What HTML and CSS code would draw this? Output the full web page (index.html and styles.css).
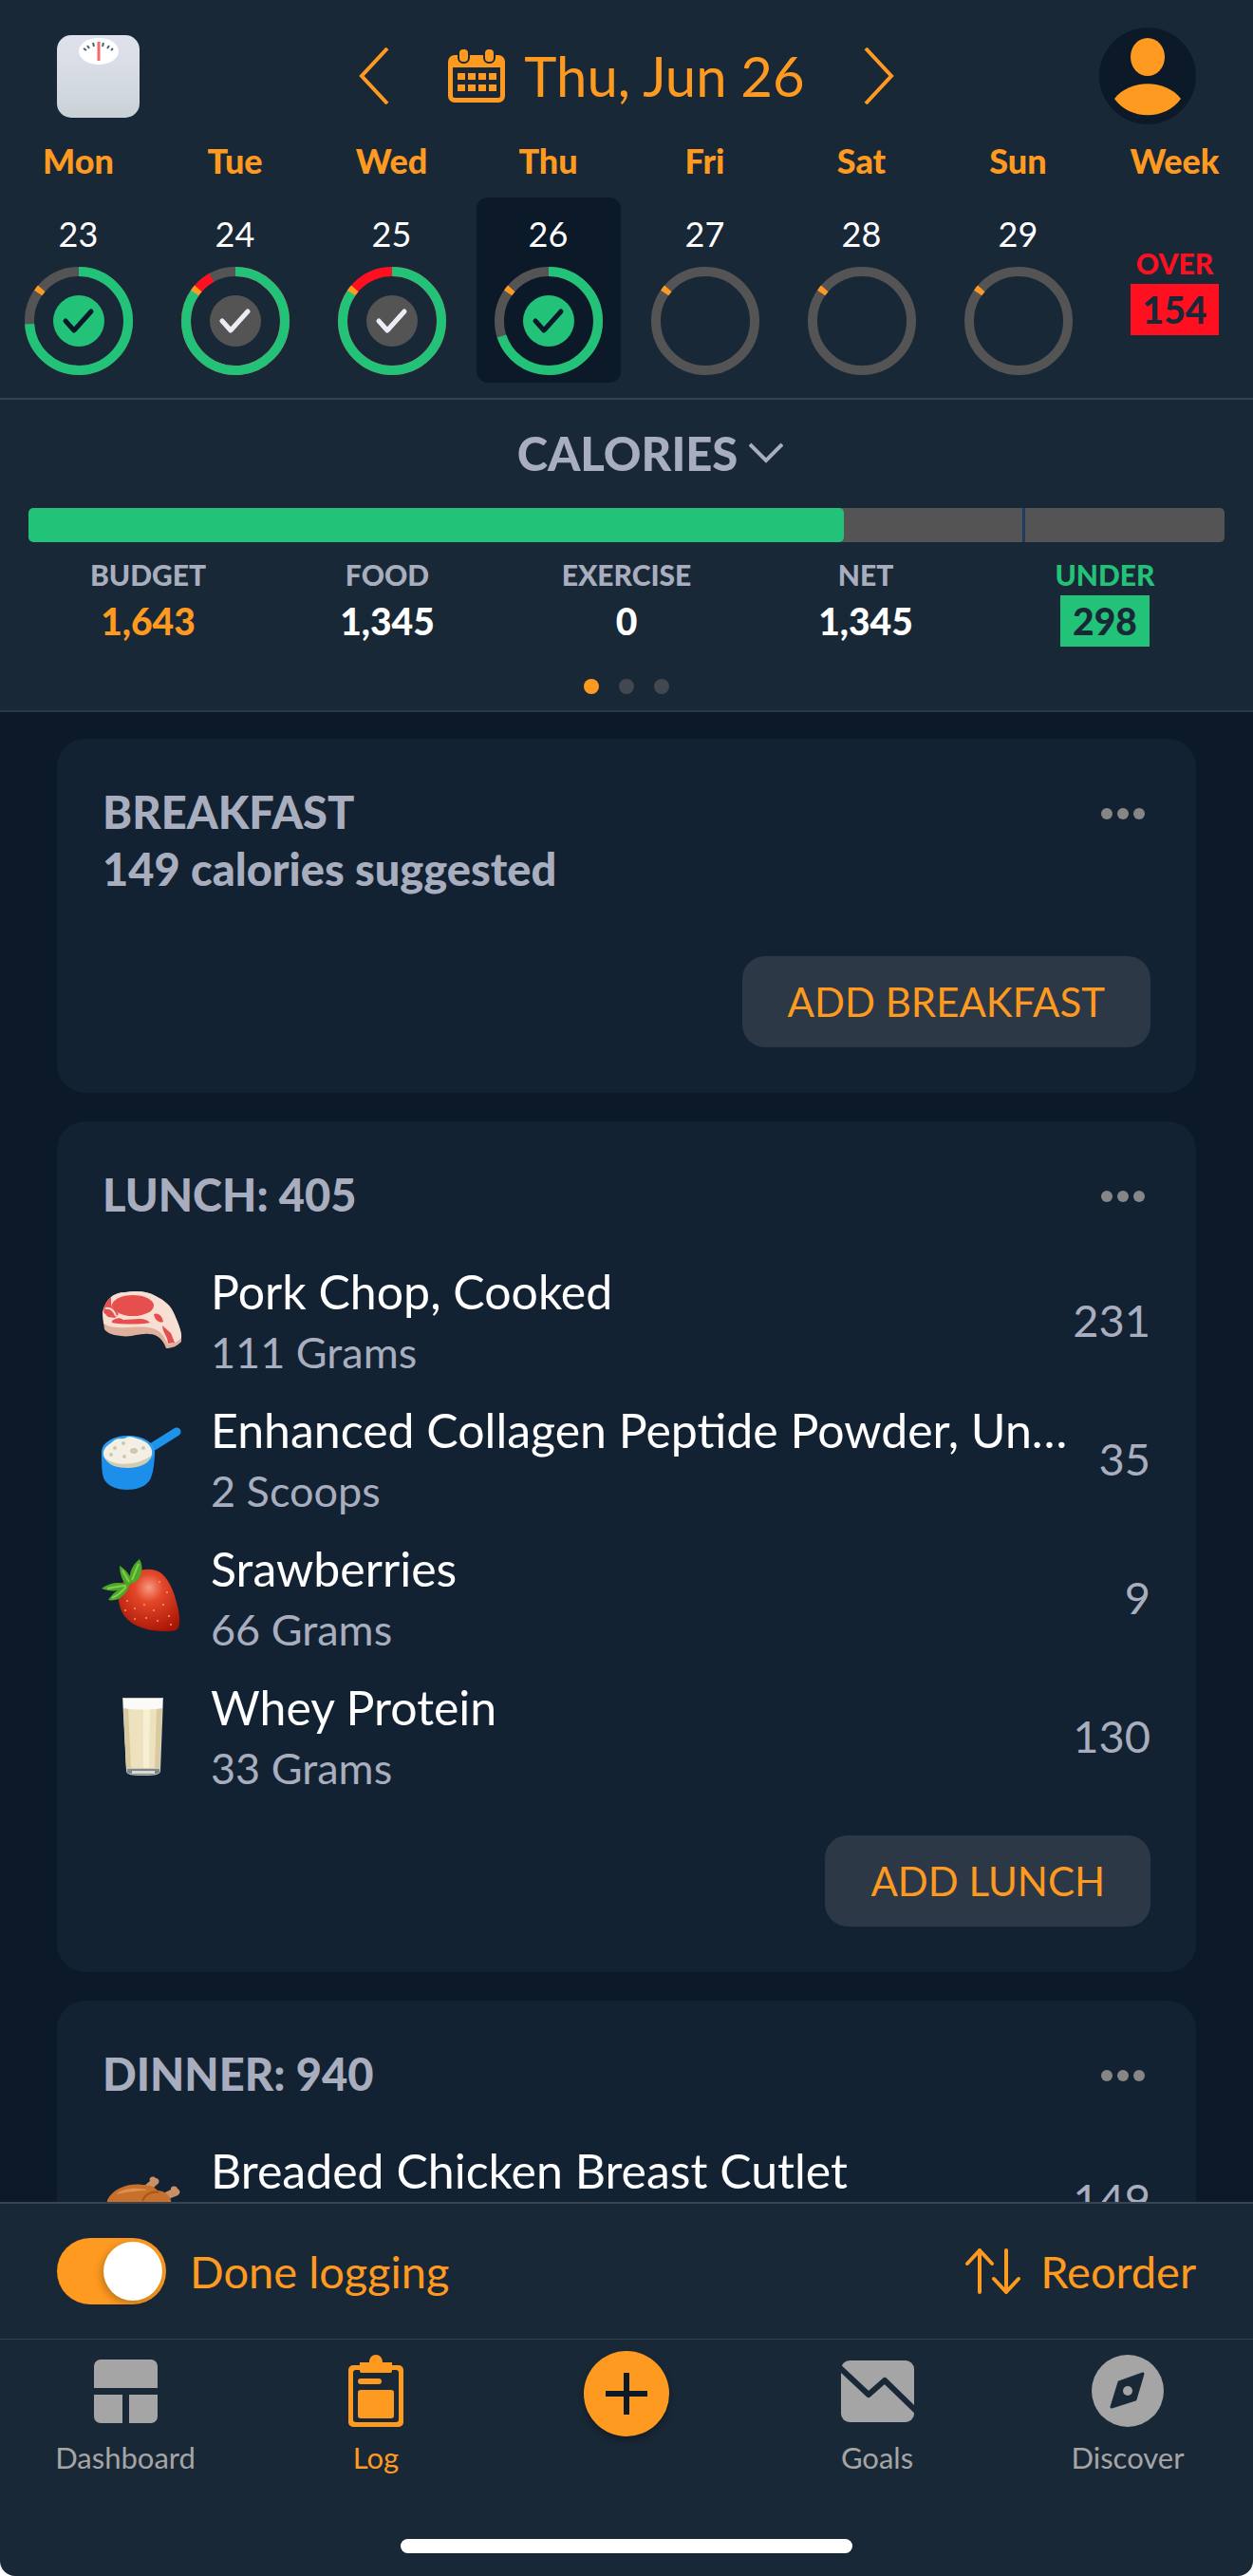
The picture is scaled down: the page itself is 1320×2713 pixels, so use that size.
FILE: index.html
```html
<!DOCTYPE html>
<html lang="en">
<head>
    <meta charset="UTF-8">
    <meta name="viewport" content="width=device-width, initial-scale=1.0">
    <title>Food Log</title>
    <link rel="stylesheet" href="styles.css">
</head>
<body>
    <div class="app">
        <header class="header">
            <div class="topbar">
                <button type="button" class="icon-btn" aria-label="Weigh in">
                    <svg width="87" height="87" viewBox="0 0 87 87">
                        <defs>
                            <linearGradient id="scaleFill" x1="0" y1="0" x2="0" y2="1">
                                <stop offset="0" stop-color="#dfe2ea"/>
                                <stop offset="0.6" stop-color="#d5dae2"/>
                                <stop offset="1" stop-color="#c8d1d6"/>
                            </linearGradient>
                        </defs>
                        <rect width="87" height="87" rx="15" fill="url(#scaleFill)"/>
                        <ellipse cx="44" cy="17" rx="21" ry="14" fill="#fff"/>
                        <path d="M28 14l3 2M32 11l2 3M38 8l1 4M49 8l-1 4M55 11l-2 3M59 14l-2 2" stroke="#4a6274" stroke-width="2"/>
                        <path d="M44 7v20" stroke="#f26b6b" stroke-width="3"/>
                    </svg>
                </button>
                <div class="date-nav">
                    <button type="button" class="icon-btn" aria-label="Previous day">
                        <svg width="32" height="60" viewBox="0 0 32 60" fill="none" stroke="#ff9a20" stroke-width="4">
                            <path d="M30 1L3 30l27 29"/>
                        </svg>
                    </button>
                    <button type="button" class="date">
                        <svg width="60" height="56" viewBox="0 0 60 56">
                            <path fill="#ff9a20" fill-rule="evenodd" d="M7 6h46a7 7 0 0 1 7 7v36a7 7 0 0 1-7 7H7a7 7 0 0 1-7-7V13a7 7 0 0 1 7-7zM5 19v30a2 2 0 0 0 2 2h46a2 2 0 0 0 2-2V19z"/>
                            <g fill="#ff9a20" stroke="#192837" stroke-width="2">
                                <rect x="11" y="-1" width="11" height="15" rx="5"/>
                                <rect x="38" y="-1" width="11" height="15" rx="5"/>
                            </g>
                            <path fill="#ff9a20" d="M10 25h8v7h-8zM21 25h8v7h-8zM32 25h8v7h-8zM43 25h8v7h-8zM10 37h8v7h-8zM21 37h8v7h-8zM32 37h8v7h-8zM43 37h8v7h-8z"/>
                        </svg>
                        Thu, Jun 26
                    </button>
                    <button type="button" class="icon-btn" aria-label="Next day">
                        <svg width="32" height="60" viewBox="0 0 32 60" fill="none" stroke="#ff9a20" stroke-width="4">
                            <path d="M2 1l27 29L2 59"/>
                        </svg>
                    </button>
                </div>
                <button type="button" class="icon-btn profile" aria-label="Profile">
                    <svg width="102" height="102" viewBox="0 0 102 102">
                        <circle cx="51" cy="51" r="51" fill="#0c1928"/>
                        <ellipse cx="51" cy="31" rx="18" ry="20" fill="#ff9a20"/>
                        <path d="M16 75C32 54 70 54 86 75 70 98 32 98 16 75z" fill="#ff9a20"/>
                    </svg>
                </button>
            </div>

            <div class="week">
                <div class="day">
                    <span class="day-name">Mon</span>
                    <a href="#" class="day-cell">
                        23
                        <svg class="ring" viewBox="0 0 114 114">
                            <circle class="track" cx="57" cy="57" r="52"/>
                            <circle class="eaten" cx="57" cy="57" r="52" pathLength="100" stroke-dasharray="74 100"/>
                            <circle class="goal" cx="57" cy="57" r="52" pathLength="100" stroke-dasharray="0 84.6 1.8 100"/>
                            <circle class="done" cx="57" cy="57" r="27"/>
                            <path class="tick" d="M43 57l9 10 18-20"/>
                        </svg>
                    </a>
                </div>
                <div class="day">
                    <span class="day-name">Tue</span>
                    <a href="#" class="day-cell">
                        24
                        <svg class="ring over" viewBox="0 0 114 114">
                            <circle class="track" cx="57" cy="57" r="52"/>
                            <circle class="extra" cx="57" cy="57" r="52" pathLength="100" stroke-dasharray="92 100"/>
                            <circle class="eaten" cx="57" cy="57" r="52" pathLength="100" stroke-dasharray="85 100"/>
                            <circle class="goal" cx="57" cy="57" r="52" pathLength="100" stroke-dasharray="0 84.6 1.8 100"/>
                            <circle class="done" cx="57" cy="57" r="27"/>
                            <path class="tick" d="M43 57l9 10 18-20"/>
                        </svg>
                    </a>
                </div>
                <div class="day">
                    <span class="day-name">Wed</span>
                    <a href="#" class="day-cell">
                        25
                        <svg class="ring over" viewBox="0 0 114 114">
                            <circle class="extra" cx="57" cy="57" r="52"/>
                            <circle class="eaten" cx="57" cy="57" r="52" pathLength="100" stroke-dasharray="85 100"/>
                            <circle class="goal" cx="57" cy="57" r="52" pathLength="100" stroke-dasharray="0 84.6 1.8 100"/>
                            <circle class="done" cx="57" cy="57" r="27"/>
                            <path class="tick" d="M43 57l9 10 18-20"/>
                        </svg>
                    </a>
                </div>
                <div class="day">
                    <span class="day-name">Thu</span>
                    <a href="#" class="day-cell selected" aria-current="date">
                        26
                        <svg class="ring" viewBox="0 0 114 114">
                            <circle class="track" cx="57" cy="57" r="52"/>
                            <circle class="eaten" cx="57" cy="57" r="52" pathLength="100" stroke-dasharray="70 100"/>
                            <circle class="goal" cx="57" cy="57" r="52" pathLength="100" stroke-dasharray="0 84.6 1.8 100"/>
                            <circle class="done" cx="57" cy="57" r="27"/>
                            <path class="tick" d="M43 57l9 10 18-20"/>
                        </svg>
                    </a>
                </div>
                <div class="day">
                    <span class="day-name">Fri</span>
                    <a href="#" class="day-cell">
                        27
                        <svg class="ring" viewBox="0 0 114 114">
                            <circle class="track" cx="57" cy="57" r="52"/>
                            <circle class="goal" cx="57" cy="57" r="52" pathLength="100" stroke-dasharray="0 84.6 1.8 100"/>
                        </svg>
                    </a>
                </div>
                <div class="day">
                    <span class="day-name">Sat</span>
                    <a href="#" class="day-cell">
                        28
                        <svg class="ring" viewBox="0 0 114 114">
                            <circle class="track" cx="57" cy="57" r="52"/>
                            <circle class="goal" cx="57" cy="57" r="52" pathLength="100" stroke-dasharray="0 84.6 1.8 100"/>
                        </svg>
                    </a>
                </div>
                <div class="day">
                    <span class="day-name">Sun</span>
                    <a href="#" class="day-cell">
                        29
                        <svg class="ring" viewBox="0 0 114 114">
                            <circle class="track" cx="57" cy="57" r="52"/>
                            <circle class="goal" cx="57" cy="57" r="52" pathLength="100" stroke-dasharray="0 84.6 1.8 100"/>
                        </svg>
                    </a>
                </div>
                <div class="day">
                    <span class="day-name">Week</span>
                    <div class="week-total">
                        <span class="stat-label red">OVER</span>
                        <span class="badge badge-red">154</span>
                    </div>
                </div>
            </div>
        </header>

        <section class="summary">
            <button type="button" class="summary-title">
                CALORIES
                <svg width="36" height="22" viewBox="0 0 36 22" fill="none" stroke="#a9aebf" stroke-width="4">
                    <path d="M1 2l17 17L35 2"/>
                </svg>
            </button>
            <div class="bar">
                <div class="bar-fill" style="width: 68.2%"></div>
                <div class="bar-mark" style="left: 83.1%"></div>
            </div>
            <div class="stats">
                <div class="stat">
                    <span class="stat-label">BUDGET</span>
                    <span class="stat-value orange">1,643</span>
                </div>
                <div class="stat">
                    <span class="stat-label">FOOD</span>
                    <span class="stat-value">1,345</span>
                </div>
                <div class="stat">
                    <span class="stat-label">EXERCISE</span>
                    <span class="stat-value">0</span>
                </div>
                <div class="stat">
                    <span class="stat-label">NET</span>
                    <span class="stat-value">1,345</span>
                </div>
                <div class="stat">
                    <span class="stat-label green">UNDER</span>
                    <span class="badge badge-green">298</span>
                </div>
            </div>
            <div class="pager">
                <span class="pager-dot active"></span>
                <span class="pager-dot"></span>
                <span class="pager-dot"></span>
            </div>
        </section>

        <main class="meals">
            <section class="card">
                <div class="card-head">
                    <h2>BREAKFAST</h2>
                    <button type="button" class="more" aria-label="Breakfast options"><i></i><i></i><i></i></button>
                </div>
                <p class="suggested">149 calories suggested</p>
                <button type="button" class="add-btn">ADD BREAKFAST</button>
            </section>

            <section class="card">
                <div class="card-head">
                    <h2>LUNCH: 405</h2>
                    <button type="button" class="more" aria-label="Lunch options"><i></i><i></i><i></i></button>
                </div>
                <ul class="foods">
                    <li class="food">
                        <svg class="food-icon" viewBox="0 0 84 84">
                            <path fill="#dfb09c" d="M0 36C2 22 10 13 24 13c12-2 24-1 32 4 10 5 16 10 20 20 4 9 8 19 7 28-5 5-10 7-16 7-3-8-8-15-18-15-11-1-18 4-30 2-7-1-13-2-17-7z"/>
                            <path fill="#f8dfd3" d="M0 34C3 21 11 13 24 13c12-2 24-1 32 4 10 5 16 10 20 20 4 9 8 19 7 24-4 4-8 6-14 7-4-9-9-17-21-18-15-2-33 4-47-4z"/>
                            <ellipse cx="32" cy="27" rx="22" ry="11" fill="#e5504f"/>
                            <path fill="#e5504f" d="M2 28c2-5 4-8 7-10 0 6 0 9 2 12l6 6-4 4-7-1-5-5zM10 43c4-3 8-4 12-1l17-1c6 0 9 2 11 4-10 2-30 2-40 0zM54 36c5-2 9 2 10 8-3 2-9-1-10-8zM63 48l9 8 4 10-7 1c0-7-6-12-6-19z"/>
                            <path fill="none" stroke="#f8dfd3" stroke-width="2" d="M3 30c5-1 9 2 11 8"/>
                        </svg>
                        <div class="food-text">
                            <span class="food-name">Pork Chop, Cooked</span>
                            <span class="food-amount">111 Grams</span>
                        </div>
                        <span class="food-cal">231</span>
                    </li>
                    <li class="food">
                        <svg class="food-icon" viewBox="0 0 84 84">
                            <path stroke="#1e93ea" stroke-width="9" stroke-linecap="round" d="M54 29L78 14"/>
                            <path fill="#1b8fe9" d="M-1 35c0 14 0 26 4 31 9 12 37 12 46 0 4-5 6-20 6-31z"/>
                            <ellipse cx="27" cy="35" rx="28" ry="17" fill="#2a9cf1"/>
                            <path fill="#f3efe3" d="M1 38c-1-7 5-10 10-14 5-5 9-1 14-4 5-3 9 1 15 2 8 3 13 9 12 15-1 9-13 14-25 14S2 46 1 38z"/>
                            <path fill="#d3cbb2" d="M3 42c11 9 36 7 48-3-1 8-12 13-24 13C15 52 6 49 3 42z"/>
                            <g fill="#cdc6b0"><circle cx="13" cy="31" r="2"/><circle cx="22" cy="26" r="2"/><ellipse cx="33" cy="34" rx="4" ry="3"/><circle cx="23" cy="40" r="2"/><circle cx="43" cy="31" r="2"/><circle cx="9" cy="38" r="2"/></g>
                        </svg>
                        <div class="food-text">
                            <span class="food-name">Enhanced Collagen Peptide Powder, Un…</span>
                            <span class="food-amount">2 Scoops</span>
                        </div>
                        <span class="food-cal">35</span>
                    </li>
                    <li class="food">
                        <svg class="food-icon" viewBox="0 0 84 84">
                            <defs>
                                <radialGradient id="berry" cx="0.5" cy="0.3" r="0.75">
                                    <stop offset="0" stop-color="#f69a83"/>
                                    <stop offset="0.3" stop-color="#e4482a"/>
                                    <stop offset="1" stop-color="#a91405"/>
                                </radialGradient>
                            </defs>
                            <path fill="url(#berry)" d="M25 22c9-9 26-13 37-5 10 8 15 25 18 39 1 7 3 18-3 21-15 3-42 0-53-14-9-12-10-29 1-41z"/>
                            <g fill="#f3a05c"><circle cx="26" cy="46" r="1"/><circle cx="34" cy="54" r="1"/><circle cx="44" cy="50" r="1"/><circle cx="54" cy="56" r="1"/><circle cx="64" cy="50" r="1"/><circle cx="70" cy="62" r="1"/><circle cx="58" cy="67" r="1"/><circle cx="46" cy="64" r="1"/><circle cx="34" cy="65" r="1"/><circle cx="24" cy="56" r="1"/><circle cx="68" cy="37" r="1"/><circle cx="60" cy="26" r="1"/><circle cx="72" cy="71" r="1"/></g>
                            <path fill="#4da82a" d="M-1 33c8-6 17-7 25-5-4-5-6-12-6-19 5 3 9 7 11 12 0-8 4-14 10-19 4 8 3 15-1 21-3 4-8 4-10 7-2 6-5 10-11 14-3 1-7 2-11 1 3-4 6-8 10-10-6 1-12 0-17-2z"/>
                            <path fill="none" stroke="#82cf4c" stroke-width="2" d="M5 33c7-1 12-3 20-3M21 14l7 12M38 7l-7 17M10 43c5-2 10-6 15-12"/>
                        </svg>
                        <div class="food-text">
                            <span class="food-name">Srawberries</span>
                            <span class="food-amount">66 Grams</span>
                        </div>
                        <span class="food-cal">9</span>
                    </li>
                    <li class="food">
                        <svg class="food-icon" viewBox="0 0 84 84">
                            <path fill="#c9ccc8" d="M21 2h43l-3 77c0 4-5 5-18 5s-18-1-18-5z"/>
                            <path fill="#ede2bd" d="M22 12h41l-3 64H25z"/>
                            <path fill="#d9caa0" d="M22 12h5l3 64h-5zM57 12h6l-3 64h-5z"/>
                            <path fill="#f7efd3" d="M43 12h7l-1 64h-6z"/>
                            <path fill="#fbfaf6" d="M22 3h41v10c-12 2-29 2-41 0z"/>
                            <path fill="#7f8681" d="M26 77h34v4c-5 3-29 3-34 0z"/>
                            <path fill="#d8dad6" d="M31 79h24v3H31z"/>
                        </svg>
                        <div class="food-text">
                            <span class="food-name">Whey Protein</span>
                            <span class="food-amount">33 Grams</span>
                        </div>
                        <span class="food-cal">130</span>
                    </li>
                </ul>
                <button type="button" class="add-btn">ADD LUNCH</button>
            </section>

            <section class="card">
                <div class="card-head">
                    <h2>DINNER: 940</h2>
                    <button type="button" class="more" aria-label="Dinner options"><i></i><i></i><i></i></button>
                </div>
                <ul class="foods">
                    <li class="food">
                        <svg class="food-icon" viewBox="0 0 84 84">
                            <path fill="#e2e5ee" d="M2 54c20-12 60-14 80-6-6 14-70 18-80 6z"/>
                            <path fill="#c98f66" d="M44 28l6-5c-2-4 4-6 6-3 4 0 5 5 1 7l-7 7zM64 36l8-4c-1-4 6-5 7-1 4 2 3 7-2 8l-10 4z"/>
                            <path fill="#c6702c" d="M5 43c6-12 22-18 37-16 8 0 12 2 16 6 6 0 12 4 14 10 2 10-12 16-32 16S4 56 5 43z"/>
                            <path fill="#dd9250" d="M14 37c8-7 24-8 34-4-10 0-24 2-34 4z"/>
                            <path fill="none" stroke="#a4561c" stroke-width="2" d="M42 44c3-7 10-11 17-9"/>
                        </svg>
                        <div class="food-text">
                            <span class="food-name">Breaded Chicken Breast Cutlet</span>
                        </div>
                        <span class="food-cal">149</span>
                    </li>
                </ul>
            </section>
        </main>

        <div class="log-bar">
            <label class="done-logging" for="doneLogging">
                <input type="checkbox" id="doneLogging" class="toggle" checked>
                Done logging
            </label>
            <button type="button" class="reorder">
                <svg width="60" height="48" viewBox="0 0 60 48" fill="none" stroke="#ff9a20" stroke-width="4" stroke-linecap="round" stroke-linejoin="round">
                    <path d="M16 46V2M3 16L16 2l13 14M44 2v44M31 32l13 14 13-14"/>
                </svg>
                Reorder
            </button>
        </div>

        <nav class="tabs">
            <a href="#" class="tab">
                <svg width="67" height="76" viewBox="0 0 67 76" fill="#a5a5a5">
                    <path d="M7 5h53a7 7 0 0 1 7 7v23H0V12a7 7 0 0 1 7-7zM0 42h30v30H7a7 7 0 0 1-7-7zM37 42h30v23a7 7 0 0 1-7 7H37z"/>
                </svg>
                Dashboard
            </a>
            <a href="#" class="tab active" aria-current="page">
                <svg width="58" height="76" viewBox="0 0 58 76" fill="#ff9a20">
                    <path fill-rule="evenodd" d="M5 11h48a5 5 0 0 1 5 5v55a5 5 0 0 1-5 5H5a5 5 0 0 1-5-5V16a5 5 0 0 1 5-5zM8 16a3 3 0 0 0-3 3v49a3 3 0 0 0 3 3h42a3 3 0 0 0 3-3V19a3 3 0 0 0-3-3z"/>
                    <path d="M12 8h10c0-5 3-8 7-8s7 3 7 8h10v9a2 2 0 0 1-2 2H14a2 2 0 0 1-2-2z"/>
                    <rect x="10" y="25" width="25" height="6" rx="3"/>
                    <rect x="10" y="37" width="38" height="30" rx="3"/>
                </svg>
                Log
            </a>
            <button type="button" class="plus" aria-label="Add">
                <svg width="44" height="44" viewBox="0 0 44 44" stroke="#0c1928" stroke-width="6">
                    <path d="M22 0v44M0 22h44"/>
                </svg>
            </button>
            <a href="#" class="tab">
                <svg width="77" height="76" viewBox="0 0 77 76">
                    <rect y="6" width="77" height="65" rx="9" fill="#a5a5a5"/>
                    <path d="M-2 13l31 29 17-15 34 33" fill="none" stroke="#192837" stroke-width="6" stroke-linejoin="round"/>
                </svg>
                Goals
            </a>
            <a href="#" class="tab">
                <svg width="76" height="76" viewBox="0 0 76 76">
                    <circle cx="38" cy="38" r="38" fill="#a5a5a5"/>
                    <path d="M54 20L29 29l-8 26 25-8z" fill="#192837" stroke="#192837" stroke-width="3" stroke-linejoin="round"/>
                    <circle cx="38" cy="38" r="5" fill="#a5a5a5"/>
                </svg>
                Discover
            </a>
        </nav>
        <div class="home-indicator"></div>
    </div>
</body>
</html>
```

FILE: styles.css
```css
* {
    box-sizing: border-box;
}
body {
    margin: 0;
    background: #fff;
    font-family: Lato, "Open Sans", sans-serif;
    color: #fff;
}
button {
    margin: 0;
    padding: 0;
    border: none;
    background: none;
    font: inherit;
    color: inherit;
    cursor: pointer;
}
a {
    color: inherit;
    text-decoration: none;
}
svg {
    display: block;
    flex-shrink: 0;
}
.app {
    display: flex;
    flex-direction: column;
    height: 100vh;
    background: #192837;
    border-radius: 0 0 16px 16px;
}
.orange {
    color: #ff9a20;
}
.red {
    color: #ff1020;
}
.green {
    color: #22c378;
}

/* header */
.header {
    padding: 29px 0 16px;
    border-bottom: 2px solid #334150;
}
.topbar {
    display: grid;
    grid-template-columns: 1fr auto 1fr;
    align-items: center;
    padding: 0 60px;
}
.icon-btn {
    justify-self: start;
}
.profile {
    justify-self: end;
}
.date-nav {
    display: flex;
    align-items: center;
    gap: 62px;
}
.date {
    display: flex;
    align-items: center;
    gap: 20px;
    font-size: 58px;
    line-height: 72px;
    color: #ff9a20;
}
.week {
    display: grid;
    grid-template-columns: repeat(8, 1fr);
    margin-top: 16px;
}
.day {
    display: flex;
    flex-direction: column;
    align-items: center;
    gap: 17px;
}
.day-name {
    font-size: 36px;
    line-height: 44px;
    font-weight: 900;
    color: #ff9a20;
}
.day-cell {
    display: flex;
    flex-direction: column;
    align-items: center;
    gap: 13px;
    width: 152px;
    padding: 16px 0 8px;
    border-radius: 12px;
    font-size: 36px;
    line-height: 44px;
}
.day-cell.selected {
    background: #0c1928;
}
.ring {
    width: 114px;
    height: 114px;
}
.ring circle {
    fill: none;
    stroke-width: 10;
    transform: rotate(-90deg);
    transform-origin: center;
}
.ring .track {
    stroke: #545454;
}
.ring .eaten {
    stroke: #22c378;
}
.ring .extra {
    stroke: #ff1020;
}
.ring .goal {
    stroke: #ff9a20;
}
.ring .done {
    fill: #22c378;
}
.ring .tick {
    fill: none;
    stroke: #0c1928;
    stroke-width: 5;
    stroke-linecap: round;
    stroke-linejoin: round;
}
.ring.over .done {
    fill: #545454;
}
.ring.over .tick {
    stroke: #ececf4;
}
.week-total {
    flex: 1;
    display: flex;
    flex-direction: column;
    align-items: center;
    justify-content: center;
    gap: 4px;
}

/* calories summary */
.summary {
    display: flex;
    flex-direction: column;
    padding: 26px 30px 17px;
    border-bottom: 2px solid #2c3845;
}
.summary-title {
    display: flex;
    align-items: center;
    align-self: center;
    gap: 12px;
    padding-left: 50px;
    font-size: 49px;
    line-height: 60px;
    font-weight: 900;
    color: #a9aebf;
}
.bar {
    position: relative;
    height: 36px;
    margin-top: 28px;
    border-radius: 5px;
    background: #545454;
    overflow: hidden;
}
.bar-fill {
    height: 100%;
    border-radius: 5px;
    background: #22c378;
}
.bar-mark {
    position: absolute;
    top: 0;
    bottom: 0;
    width: 3px;
    background: #1f3b63;
}
.stats {
    display: grid;
    grid-template-columns: repeat(5, 1fr);
    margin-top: 16px;
}
.stat {
    display: flex;
    flex-direction: column;
    align-items: center;
    gap: 4px;
}
.stat-label {
    font-size: 30px;
    line-height: 36px;
    font-weight: 900;
}
.stat .stat-label:not(.green) {
    color: #a9aebf;
}
.stat-value,
.badge {
    font-size: 39px;
    line-height: 54px;
    font-weight: 900;
}
.badge {
    padding: 0 13px;
    color: #192837;
}
.badge-red {
    background: #ff1020;
}
.badge-green {
    background: #22c378;
}
.pager {
    display: flex;
    justify-content: center;
    gap: 21px;
    margin-top: 34px;
}
.pager-dot {
    width: 16px;
    height: 16px;
    border-radius: 50%;
    background: #43474f;
}
.pager-dot.active {
    background: #ff9a20;
}

/* meals */
.meals {
    flex: 1;
    min-height: 0;
    overflow: hidden;
    display: flex;
    flex-direction: column;
    gap: 30px;
    padding: 28px 60px 0;
    background: #0c1928;
}
.card {
    display: flex;
    flex-direction: column;
    flex-shrink: 0;
    padding: 47px 48px 48px;
    border-radius: 30px;
    background: #122232;
}
.card-head {
    display: flex;
    justify-content: space-between;
    align-items: center;
}
.card h2,
.suggested {
    margin: 0;
    font-size: 47px;
    line-height: 60px;
    font-weight: 900;
    color: #a9aebf;
}
.suggested {
    margin-bottom: 30px;
}
.more {
    display: flex;
    gap: 5px;
    padding: 26px 6px 22px;
}
.more i {
    width: 12px;
    height: 12px;
    border-radius: 50%;
    background: #868686;
}
.foods {
    list-style: none;
    margin: 29px 0 0;
    padding: 0;
}
.food {
    display: flex;
    align-items: center;
    gap: 30px;
    height: 146px;
}
.food-icon {
    width: 84px;
    height: 84px;
    overflow: visible;
}
.food-text {
    flex: 1;
    align-self: flex-start;
    display: flex;
    flex-direction: column;
    min-width: 0;
    padding-top: 11px;
}
.food-name {
    overflow: hidden;
    text-overflow: ellipsis;
    white-space: nowrap;
    font-size: 50px;
    line-height: 64px;
}
.food-amount {
    font-size: 45px;
    line-height: 64px;
    color: #a9aebf;
}
.food-cal {
    font-size: 47px;
    color: #a9aebf;
}
.add-btn {
    align-self: flex-end;
    margin-top: 32px;
    padding: 0 48px;
    border-radius: 24px;
    background: #2c3846;
    font-size: 42px;
    line-height: 96px;
    color: #ff9a20;
}

/* bottom bars */
.log-bar {
    display: flex;
    justify-content: space-between;
    align-items: center;
    height: 144px;
    padding: 0 60px;
    border-top: 2px solid #3a4450;
    font-size: 47px;
    color: #ff9a20;
}
.done-logging {
    display: flex;
    align-items: center;
    gap: 25px;
}
.toggle {
    appearance: none;
    display: flex;
    align-items: center;
    justify-content: flex-end;
    width: 115px;
    height: 70px;
    margin: 0;
    padding: 0 4px;
    border-radius: 35px;
    background: #ff9a20;
}
.toggle::before {
    content: "";
    width: 62px;
    height: 62px;
    border-radius: 50%;
    background: #fff;
    box-shadow: -2px 3px 8px rgba(0, 0, 0, 0.25);
}
.toggle:not(:checked) {
    justify-content: flex-start;
    background: #545454;
}
.reorder {
    display: flex;
    align-items: center;
    gap: 20px;
}
.tabs {
    display: grid;
    grid-template-columns: repeat(5, 1fr);
    justify-items: center;
    align-items: start;
    padding-top: 12px;
    border-top: 1px solid #34424d;
}
.tab {
    display: flex;
    flex-direction: column;
    align-items: center;
    gap: 14px;
    padding-top: 4px;
    font-size: 31px;
    line-height: 36px;
    color: #a5a5a5;
}
.tab.active {
    color: #ff9a20;
}
.plus {
    display: flex;
    align-items: center;
    justify-content: center;
    width: 90px;
    height: 90px;
    border-radius: 50%;
    background: #ff9a20;
    box-shadow: 0 4px 8px rgba(0, 0, 0, 0.3);
}
.home-indicator {
    align-self: center;
    width: 36%;
    height: 15px;
    margin: 68px 0 24px;
    border-radius: 8px;
    background: #fff;
}
```
